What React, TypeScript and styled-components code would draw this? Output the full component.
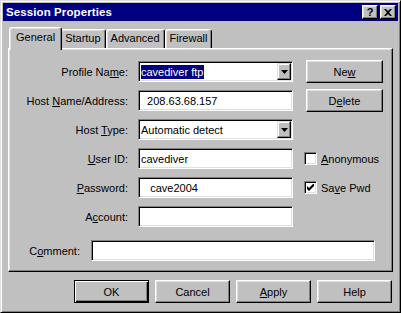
import React from "react";
import styled, { createGlobalStyle } from "styled-components";

const Global = createGlobalStyle`
  html, body { margin: 0; padding: 0; background: #c0c0c0; }
  body {
    font-family: "Liberation Sans", Arial, sans-serif;
    font-size: 11px;
    color: #000;
  }
  * { box-sizing: border-box; }
`;

const Window = styled.div`
  width: 401px;
  height: 313px;
  background: #c0c0c0;
  border: 1px solid;
  border-color: #dfdfdf #000 #000 #dfdfdf;
  box-shadow: inset 1px 1px #fff, inset -1px -1px #808080;
  padding: 2px;
  display: flex;
  flex-direction: column;
`;

const TitleBar = styled.div`
  height: 18px;
  background: #000080;
  color: #fff;
  display: flex;
  align-items: center;
  padding: 0 2px 0 3px;
  gap: 2px;
`;

const TitleText = styled.div`
  flex: 1;
  font-weight: bold;
  font-size: 11.5px;
  letter-spacing: 0.1px;
`;

const CapButton = styled.div`
  width: 16px;
  height: 14px;
  background: #c0c0c0;
  border: 1px solid;
  border-color: #fff #000 #000 #fff;
  box-shadow: inset -1px -1px #808080, inset 1px 1px #dfdfdf;
  color: #000;
  font-weight: bold;
  font-size: 11px;
  display: flex;
  align-items: center;
  justify-content: center;
  line-height: 1;
`;

const Content = styled.div`
  flex: 1;
  display: flex;
  flex-direction: column;
  padding: 6px 5px 0 5px;
`;

const TabStrip = styled.div`
  height: 21px;
  display: flex;
  align-items: flex-end;
  padding-left: 3px;
`;

const Tab = styled.div<{ $active?: boolean }>`
  position: relative;
  height: ${(p) => (p.$active ? "23px" : "19px")};
  margin: ${(p) => (p.$active ? "0 -2px -2px -2px" : "0")};
  padding: ${(p) => (p.$active ? "3px 6px 0 6px" : "2px 4px 0 4px")};
  z-index: ${(p) => (p.$active ? 2 : 1)};
  background: #c0c0c0;
  border-top: 1px solid #fff;
  border-left: 1px solid #fff;
  border-right: 1px solid #000;
  border-radius: 3px 3px 0 0;
  box-shadow: inset -1px 0 #808080, inset 1px 1px #dfdfdf;
  white-space: nowrap;
  line-height: 13px;
`;

const Panel = styled.div`
  height: 224px;
  border: 1px solid;
  border-color: #fff #000 #000 #fff;
  box-shadow: inset -1px -1px #808080, inset 1px 1px #dfdfdf;
  padding: 11px 0 0 1px;
  display: flex;
  flex-direction: column;
`;

const Row = styled.div<{ $extraTop?: number }>`
  display: flex;
  align-items: center;
  height: 23px;
  margin-bottom: 6px;
  margin-top: ${(p) => p.$extraTop ?? 0}px;
`;

const Label = styled.div<{ $width: number; $gap: number }>`
  width: ${(p) => p.$width}px;
  margin-right: ${(p) => p.$gap}px;
  text-align: right;
  white-space: nowrap;
`;

const Field = styled.div<{ $width: number }>`
  width: ${(p) => p.$width}px;
  height: 21px;
  background: #fff;
  border: 1px solid;
  border-color: #808080 #fff #fff #808080;
  box-shadow: inset 1px 1px #000, inset -1px -1px #dfdfdf;
  display: flex;
  align-items: center;
  padding: 1px 2px 1px 2px;
  white-space: pre;
`;

const ComboField = styled(Field)`
  padding-right: 1px;
`;

const ComboValue = styled.div`
  flex: 1;
  white-space: pre;
`;

const Selected = styled.span`
  background: #000080;
  color: #fff;
  padding: 0 1px 0 0;
  line-height: 14px;
  display: inline-block;
`;

const DropButton = styled.div`
  width: 14px;
  height: 17px;
  background: #c0c0c0;
  border: 1px solid;
  border-color: #dfdfdf #000 #000 #dfdfdf;
  box-shadow: inset -1px -1px #808080, inset 1px 1px #fff;
  display: flex;
  align-items: center;
  justify-content: center;
`;

const SideButton = styled.div`
  margin-left: 13px;
  width: 77px;
  height: 23px;
  background: #c0c0c0;
  border: 1px solid;
  border-color: #fff #000 #000 #fff;
  box-shadow: inset -1px -1px #808080, inset 1px 1px #dfdfdf;
  display: flex;
  align-items: center;
  justify-content: center;
`;

const CheckWrap = styled.div`
  margin-left: 11px;
  display: flex;
  align-items: center;
  gap: 4px;
`;

const CheckBox = styled.div`
  width: 13px;
  height: 13px;
  background: #fff;
  border: 1px solid;
  border-color: #808080 #fff #fff #808080;
  box-shadow: inset 1px 1px #000, inset -1px -1px #dfdfdf;
  display: flex;
  align-items: center;
  justify-content: center;
`;

const ButtonRow = styled.div`
  margin-top: 8px;
  display: flex;
  justify-content: flex-end;
  gap: 6px;
  padding-right: 1px;
`;

const DlgButton = styled.div<{ $default?: boolean }>`
  width: 75px;
  height: 23px;
  background: #c0c0c0;
  border: 1px solid;
  border-color: ${(p) => (p.$default ? "#000" : "#fff #000 #000 #fff")};
  box-shadow: ${(p) =>
    p.$default
      ? "inset 1px 1px #fff, inset -1px -1px #000, inset -2px -2px #808080"
      : "inset -1px -1px #808080, inset 1px 1px #dfdfdf"};
  display: flex;
  align-items: center;
  justify-content: center;
`;

const Arrow = () => (
  <svg width="7" height="4" viewBox="0 0 7 4">
    <path d="M0 0H7L3.5 4Z" fill="#000" />
  </svg>
);

const CloseGlyph = () => (
  <svg width="8" height="7" viewBox="0 0 8 7">
    <path d="M0 0h2l2 2 2-2h2L5 3.5 8 7H6L4 5 2 7H0l3-3.5Z" fill="#000" />
  </svg>
);

const Check = () => (
  <svg width="7" height="7" viewBox="0 0 7 7">
    <path d="M0 2v3l2 2 5-5V-1L2 4Z" fill="#000" />
  </svg>
);

export default function App() {
  return (
    <>
      <Global />
      <Window>
        <TitleBar>
          <TitleText>Session Properties</TitleText>
          <CapButton>?</CapButton>
          <CapButton>
            <CloseGlyph />
          </CapButton>
        </TitleBar>
        <Content>
          <TabStrip>
            <Tab $active>General</Tab>
            <Tab>Startup</Tab>
            <Tab>Advanced</Tab>
            <Tab>Firewall</Tab>
          </TabStrip>
          <Panel>
            <Row>
              <Label $width={118} $gap={10}>
                Profile Na<u>m</u>e:
              </Label>
              <ComboField $width={155}>
                <ComboValue>
                  <Selected>cavediver ftp</Selected>
                </ComboValue>
                <DropButton>
                  <Arrow />
                </DropButton>
              </ComboField>
              <SideButton>
                Ne<u>w</u>
              </SideButton>
            </Row>
            <Row>
              <Label $width={118} $gap={10}>
                Host <u>N</u>ame/Address:
              </Label>
              <Field $width={155}>{"  208.63.68.157"}</Field>
              <SideButton>
                D<u>e</u>lete
              </SideButton>
            </Row>
            <Row>
              <Label $width={118} $gap={10}>
                Host <u>T</u>ype:
              </Label>
              <ComboField $width={155}>
                <ComboValue>Automatic detect</ComboValue>
                <DropButton>
                  <Arrow />
                </DropButton>
              </ComboField>
            </Row>
            <Row>
              <Label $width={118} $gap={10}>
                <u>U</u>ser ID:
              </Label>
              <Field $width={155}>cavediver</Field>
              <CheckWrap>
                <CheckBox />
                <span>
                  <u>A</u>nonymous
                </span>
              </CheckWrap>
            </Row>
            <Row>
              <Label $width={118} $gap={10}>
                <u>P</u>assword:
              </Label>
              <Field $width={155}>{"   cave2004"}</Field>
              <CheckWrap>
                <CheckBox>
                  <Check />
                </CheckBox>
                <span>
                  Sa<u>v</u>e Pwd
                </span>
              </CheckWrap>
            </Row>
            <Row>
              <Label $width={118} $gap={10}>
                A<u>c</u>count:
              </Label>
              <Field $width={155} />
            </Row>
            <Row $extraTop={5}>
              <Label $width={70} $gap={11}>
                C<u>o</u>mment:
              </Label>
              <Field $width={284} />
            </Row>
          </Panel>
          <ButtonRow>
            <DlgButton $default>OK</DlgButton>
            <DlgButton>Cancel</DlgButton>
            <DlgButton>
              <u>A</u>pply
            </DlgButton>
            <DlgButton>Help</DlgButton>
          </ButtonRow>
        </Content>
      </Window>
    </>
  );
}
